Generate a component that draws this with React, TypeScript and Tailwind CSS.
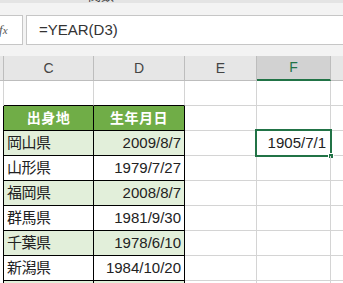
import React from "react";

const rows: [string, string, boolean][] = [
  ["岡山県", "2009/8/7", true],
  ["山形県", "1979/7/27", false],
  ["福岡県", "2008/8/7", true],
  ["群馬県", "1981/9/30", false],
  ["千葉県", "1978/6/10", true],
  ["新潟県", "1984/10/20", false],
  ["", "", true],
];

export default function App() {
  return (
    <div
      className="w-[343px] h-[283px] overflow-hidden bg-white relative"
      style={{ fontFamily: '"Liberation Sans","Noto Sans CJK JP",sans-serif' }}
    >
      {/* title strip */}
      <div className="h-[3px] bg-[#e4e4e4] overflow-hidden">
        <div className="ml-[88px] -mt-[11px] text-[13px] leading-[14px] text-[#444]">関数</div>
      </div>
      {/* formula bar area */}
      <div className="h-[53px] bg-[#f3f3f3] pt-[12px]">
        <div className="flex h-[30px]">
          <div className="w-[23px] h-full bg-white border-y border-r border-[#c6c6c6] flex items-center">
            <span
              className="-ml-[1px] text-[13px] italic text-[#555]"
              style={{ fontFamily: '"Liberation Serif",serif' }}
            >
              f<span className="text-[11px]">x</span>
            </span>
          </div>
          <div className="ml-[3px] flex-1 h-full bg-white border-y border-l border-[#c6c6c6] flex items-center pl-[12px] text-[15px] text-[#333]">
            =YEAR(D3)
          </div>
        </div>
      </div>
      {/* column header row */}
      <div className="flex h-[25px] bg-[#e6e6e6] border-b border-[#bdbdbd] text-[14px] text-[#444]">
        <div className="w-[4px] shrink-0 border-r border-[#bdbdbd]" />
        <div className="w-[90px] shrink-0 border-r border-[#bdbdbd] flex items-center justify-center">C</div>
        <div className="w-[91px] shrink-0 border-r border-[#bdbdbd] flex items-center justify-center">D</div>
        <div className="w-[72px] shrink-0 border-r border-[#bdbdbd] flex items-center justify-center">E</div>
        <div className="w-[74px] shrink-0 -mb-[1px] bg-[#d2d2d2] border-r border-[#bdbdbd] border-b-2 border-b-[#217346] flex items-center justify-center text-[#217346]">
          F
        </div>
        <div className="flex-1" />
      </div>
      {/* empty row */}
      <div className="flex h-[25px]">
        <div className="w-[4px] shrink-0 border-r border-[#d4d4d4]" />
        <div className="w-[90px] shrink-0 border-r border-[#d4d4d4] border-b border-b-black" />
        <div className="w-[91px] shrink-0 border-r border-[#d4d4d4] border-b border-b-black" />
        <div className="w-[72px] shrink-0 border-r border-b border-[#d4d4d4]" />
        <div className="w-[74px] shrink-0 border-r border-b border-[#d4d4d4]" />
        <div className="flex-1 border-b border-[#d4d4d4]" />
      </div>
      {/* green header row */}
      <div className="flex h-[25px]">
        <div className="w-[4px] shrink-0 border-r border-black" />
        <div className="w-[90px] shrink-0 bg-[#70ad47] border-r border-b border-black flex items-center justify-center text-white font-bold text-[14px] tracking-[0.5px]">
          出身地
        </div>
        <div className="w-[91px] shrink-0 bg-[#70ad47] border-r border-b border-black flex items-center justify-center text-white font-bold text-[14px] tracking-[0.5px]">
          生年月日
        </div>
        <div className="w-[72px] shrink-0 border-r border-b border-[#d4d4d4]" />
        <div className="w-[74px] shrink-0 border-r border-b border-[#d4d4d4]" />
        <div className="flex-1 border-b border-[#d4d4d4]" />
      </div>
      {rows.map(([pref, date, green], i) => (
        <div key={i} className="flex h-[25px] text-[15px] text-[#222]">
          <div className="w-[4px] shrink-0 border-r border-black" />
          <div
            className={
              "w-[90px] shrink-0 border-r border-b border-black flex items-center pl-[3px] tracking-[-0.5px] " +
              (green ? "bg-[#e2efda]" : "bg-white")
            }
          >
            {pref}
          </div>
          <div
            className={
              "w-[91px] shrink-0 border-r border-b border-black flex items-center justify-end pr-[3px] " +
              (green ? "bg-[#e2efda]" : "bg-white")
            }
          >
            {date}
          </div>
          <div className="w-[72px] shrink-0 border-r border-b border-[#d4d4d4]" />
          <div className="w-[74px] shrink-0 border-r border-b border-[#d4d4d4] relative flex items-center justify-end pr-[4px]">
            {i === 0 && (
              <>
                <span>1905/7/1</span>
                <div className="absolute left-[-2px] top-[-2px] right-[-2px] bottom-[-2px] border-2 border-[#217346]" />
                <div className="absolute right-[-4px] bottom-[-4px] w-[6px] h-[6px] bg-[#217346] border border-white" />
              </>
            )}
          </div>
          <div className="flex-1 border-b border-[#d4d4d4]" />
        </div>
      ))}
    </div>
  );
}
